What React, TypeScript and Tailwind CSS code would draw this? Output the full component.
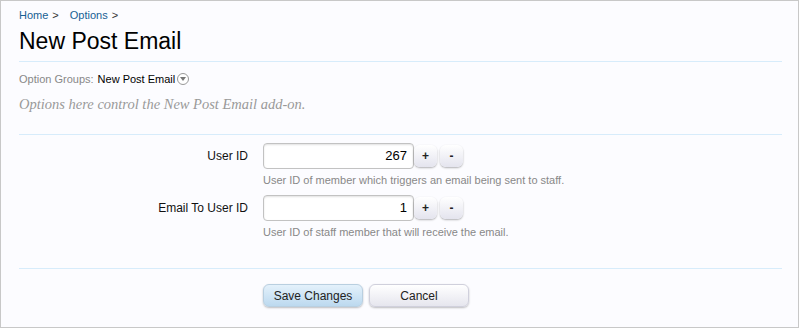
export default function App() {
  return (
    <div className="w-[799px] h-[328px] border border-[#c8c8c8] bg-[#fcfcff] pl-[18px] pr-[16px] font-['Liberation_Sans',Arial,sans-serif] overflow-hidden">
      <div className="pt-[7px] h-[24px] text-[11px] leading-[14px] text-[#176093]">
        <span>Home</span>
        <span className="text-[#333] ml-[4px]">&gt;</span>
        <span className="ml-[11px]">Options</span>
        <span className="text-[#333] ml-[4px]">&gt;</span>
      </div>
      <h1 className="text-[23px] leading-[28px] text-black h-[37px] pt-[2px] border-b border-[#d7ecfb]">
        New Post Email
      </h1>

      <div className="mt-[10px] flex items-center text-[11px] leading-[14px] h-[14px]">
        <span className="text-[#888]">Option Groups:</span>
        <span className="ml-[4px] text-black">New Post Email</span>
        <span className="ml-[2px] w-[12px] h-[12px] rounded-full border border-[#999] bg-white flex items-center justify-center">
          <svg width="6" height="4" viewBox="0 0 6 4">
            <path d="M0 0 L6 0 L3 4 Z" fill="#777" />
          </svg>
        </span>
      </div>
      <p className="mt-[9px] font-['Liberation_Serif','Times_New_Roman',serif] italic text-[14.5px] leading-[18px] text-[#999] pb-[21px] border-b border-[#d7ecfb]">
        Options here control the New Post Email add-on.
      </p>

      <div className="pt-[8px] pb-[29px] border-b border-[#d7ecfb]">
        <OptionRow
          label="User ID"
          value="267"
          hint="User ID of member which triggers an email being sent to staff."
        />
        <div className="h-[8px]" />
        <OptionRow
          label="Email To User ID"
          value="1"
          hint="User ID of staff member that will receive the email."
        />
      </div>

      <div className="pt-[15px] pl-[244px] flex gap-[6px] text-[12px]">
        <button className="w-[100px] h-[23px] rounded-[6px] border border-[#b9cfe0] bg-gradient-to-b from-[#e4f1fb] to-[#bcd9ef] text-[#222] shadow-[0_1px_2px_rgba(0,0,0,0.25)]">
          Save Changes
        </button>
        <button className="w-[100px] h-[23px] rounded-[6px] border border-[#d0d0dc] bg-gradient-to-b from-[#ffffff] to-[#e6e6ee] text-[#222] shadow-[0_1px_2px_rgba(0,0,0,0.25)]">
          Cancel
        </button>
      </div>
    </div>
  );
}

function OptionRow({
  label,
  value,
  hint,
}: {
  label: string;
  value: string;
  hint: string;
}) {
  return (
    <div className="flex">
      <div className="w-[229px] text-right text-[12px] leading-[26px] text-[#111]">
        {label}
      </div>
      <div className="ml-[15px]">
        <div className="flex items-center">
          <div className="w-[151px] h-[26px] rounded-[4px] border border-[#c2c2c2] bg-white shadow-[inset_0_1px_2px_rgba(0,0,0,0.12)] text-right pr-[6px] text-[13px] leading-[24px] text-black">
            {value}
          </div>
          <StepButton>+</StepButton>
          <div className="w-[3px]" />
          <StepButton>-</StepButton>
        </div>
        <div className="mt-[4px] text-[11px] leading-[14px] text-[#888]">
          {hint}
        </div>
      </div>
    </div>
  );
}

function StepButton({ children }: { children: React.ReactNode }) {
  return (
    <div className="w-[23px] h-[22px] rounded-[6px] bg-gradient-to-b from-[#ffffff] to-[#e4e4ee] shadow-[0_1px_2px_rgba(0,0,0,0.3)] flex items-center justify-center text-[12px] font-bold text-[#222]">
      {children}
    </div>
  );
}
